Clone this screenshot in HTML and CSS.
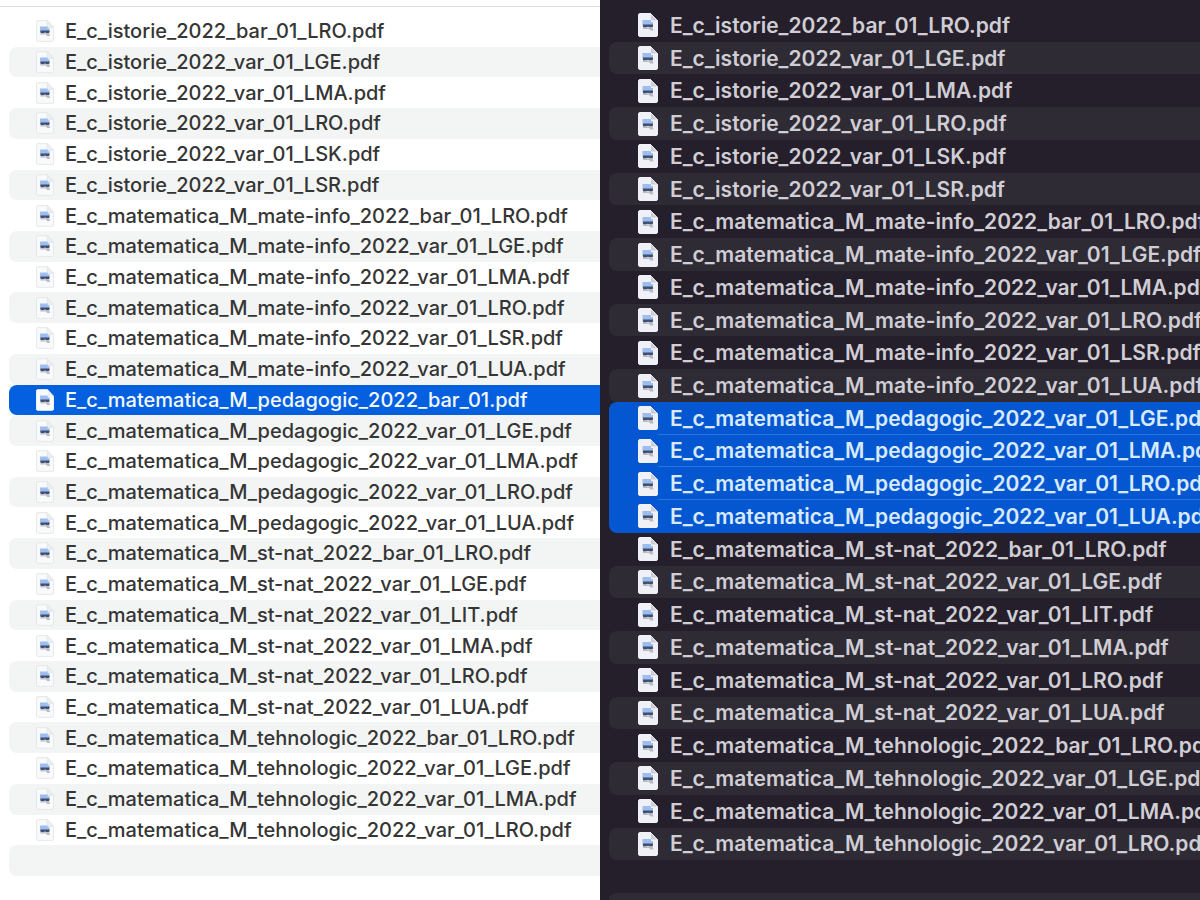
FILE: index.html
```html
<!DOCTYPE html>
<html lang="ro">
<head>
<meta charset="utf-8">
<title>Fișiere</title>
<link rel="stylesheet" href="styles.css">
</head>
<body>
<svg class="sprite" aria-hidden="true">
  <symbol id="doc" viewBox="0 0 20 24">
    <path class="sheet" d="M2 .5h10.500L19.500 8v14a1.500 1.500 0 0 1-1.500 1.500H2A1.500 1.500 0 0 1 .5 22V2A1.500 1.500 0 0 1 2 .5z"/>
    <path class="fold" d="M12.500 .5 19.500 8h-5.500a1.500 1.500 0 0 1-1.500-1.500z"/>
    <path class="sky" d="M4.500 7h8.500v2h2v4H4.500z"/>
    <path class="ink" d="M5 11.500h10v2l-1 1h-2l-2-.8-2 .8H5z"/>
    <path class="shade" d="M5 14.500h10v1.200l.5 1.800h-3l-1.500-1.500H5z"/>
  </symbol>
</svg>
<main class="compare">
  <section class="pane light">
    <ul class="files">
      <li class="row"><svg class="icon"><use href="#doc"/></svg><span>E_c_istorie_2022_bar_01_LRO.pdf</span></li>
      <li class="row"><svg class="icon"><use href="#doc"/></svg><span>E_c_istorie_2022_var_01_LGE.pdf</span></li>
      <li class="row"><svg class="icon"><use href="#doc"/></svg><span>E_c_istorie_2022_var_01_LMA.pdf</span></li>
      <li class="row"><svg class="icon"><use href="#doc"/></svg><span>E_c_istorie_2022_var_01_LRO.pdf</span></li>
      <li class="row"><svg class="icon"><use href="#doc"/></svg><span>E_c_istorie_2022_var_01_LSK.pdf</span></li>
      <li class="row"><svg class="icon"><use href="#doc"/></svg><span>E_c_istorie_2022_var_01_LSR.pdf</span></li>
      <li class="row"><svg class="icon"><use href="#doc"/></svg><span>E_c_matematica_M_mate-info_2022_bar_01_LRO.pdf</span></li>
      <li class="row"><svg class="icon"><use href="#doc"/></svg><span>E_c_matematica_M_mate-info_2022_var_01_LGE.pdf</span></li>
      <li class="row"><svg class="icon"><use href="#doc"/></svg><span>E_c_matematica_M_mate-info_2022_var_01_LMA.pdf</span></li>
      <li class="row"><svg class="icon"><use href="#doc"/></svg><span>E_c_matematica_M_mate-info_2022_var_01_LRO.pdf</span></li>
      <li class="row"><svg class="icon"><use href="#doc"/></svg><span>E_c_matematica_M_mate-info_2022_var_01_LSR.pdf</span></li>
      <li class="row"><svg class="icon"><use href="#doc"/></svg><span>E_c_matematica_M_mate-info_2022_var_01_LUA.pdf</span></li>
      <li class="row selected"><svg class="icon"><use href="#doc"/></svg><span>E_c_matematica_M_pedagogic_2022_bar_01.pdf</span></li>
      <li class="row"><svg class="icon"><use href="#doc"/></svg><span>E_c_matematica_M_pedagogic_2022_var_01_LGE.pdf</span></li>
      <li class="row"><svg class="icon"><use href="#doc"/></svg><span>E_c_matematica_M_pedagogic_2022_var_01_LMA.pdf</span></li>
      <li class="row"><svg class="icon"><use href="#doc"/></svg><span>E_c_matematica_M_pedagogic_2022_var_01_LRO.pdf</span></li>
      <li class="row"><svg class="icon"><use href="#doc"/></svg><span>E_c_matematica_M_pedagogic_2022_var_01_LUA.pdf</span></li>
      <li class="row"><svg class="icon"><use href="#doc"/></svg><span>E_c_matematica_M_st-nat_2022_bar_01_LRO.pdf</span></li>
      <li class="row"><svg class="icon"><use href="#doc"/></svg><span>E_c_matematica_M_st-nat_2022_var_01_LGE.pdf</span></li>
      <li class="row"><svg class="icon"><use href="#doc"/></svg><span>E_c_matematica_M_st-nat_2022_var_01_LIT.pdf</span></li>
      <li class="row"><svg class="icon"><use href="#doc"/></svg><span>E_c_matematica_M_st-nat_2022_var_01_LMA.pdf</span></li>
      <li class="row"><svg class="icon"><use href="#doc"/></svg><span>E_c_matematica_M_st-nat_2022_var_01_LRO.pdf</span></li>
      <li class="row"><svg class="icon"><use href="#doc"/></svg><span>E_c_matematica_M_st-nat_2022_var_01_LUA.pdf</span></li>
      <li class="row"><svg class="icon"><use href="#doc"/></svg><span>E_c_matematica_M_tehnologic_2022_bar_01_LRO.pdf</span></li>
      <li class="row"><svg class="icon"><use href="#doc"/></svg><span>E_c_matematica_M_tehnologic_2022_var_01_LGE.pdf</span></li>
      <li class="row"><svg class="icon"><use href="#doc"/></svg><span>E_c_matematica_M_tehnologic_2022_var_01_LMA.pdf</span></li>
      <li class="row"><svg class="icon"><use href="#doc"/></svg><span>E_c_matematica_M_tehnologic_2022_var_01_LRO.pdf</span></li>
      <li class="row" aria-hidden="true"></li>
    </ul>
  </section>
  <section class="pane dark">
    <ul class="files">
      <li class="row"><svg class="icon"><use href="#doc"/></svg><span>E_c_istorie_2022_bar_01_LRO.pdf</span></li>
      <li class="row"><svg class="icon"><use href="#doc"/></svg><span>E_c_istorie_2022_var_01_LGE.pdf</span></li>
      <li class="row"><svg class="icon"><use href="#doc"/></svg><span>E_c_istorie_2022_var_01_LMA.pdf</span></li>
      <li class="row"><svg class="icon"><use href="#doc"/></svg><span>E_c_istorie_2022_var_01_LRO.pdf</span></li>
      <li class="row"><svg class="icon"><use href="#doc"/></svg><span>E_c_istorie_2022_var_01_LSK.pdf</span></li>
      <li class="row"><svg class="icon"><use href="#doc"/></svg><span>E_c_istorie_2022_var_01_LSR.pdf</span></li>
      <li class="row"><svg class="icon"><use href="#doc"/></svg><span>E_c_matematica_M_mate-info_2022_bar_01_LRO.pdf</span></li>
      <li class="row"><svg class="icon"><use href="#doc"/></svg><span>E_c_matematica_M_mate-info_2022_var_01_LGE.pdf</span></li>
      <li class="row"><svg class="icon"><use href="#doc"/></svg><span>E_c_matematica_M_mate-info_2022_var_01_LMA.pdf</span></li>
      <li class="row"><svg class="icon"><use href="#doc"/></svg><span>E_c_matematica_M_mate-info_2022_var_01_LRO.pdf</span></li>
      <li class="row"><svg class="icon"><use href="#doc"/></svg><span>E_c_matematica_M_mate-info_2022_var_01_LSR.pdf</span></li>
      <li class="row"><svg class="icon"><use href="#doc"/></svg><span>E_c_matematica_M_mate-info_2022_var_01_LUA.pdf</span></li>
      <li class="row selected first"><svg class="icon"><use href="#doc"/></svg><span>E_c_matematica_M_pedagogic_2022_var_01_LGE.pdf</span></li>
      <li class="row selected"><svg class="icon"><use href="#doc"/></svg><span>E_c_matematica_M_pedagogic_2022_var_01_LMA.pdf</span></li>
      <li class="row selected"><svg class="icon"><use href="#doc"/></svg><span>E_c_matematica_M_pedagogic_2022_var_01_LRO.pdf</span></li>
      <li class="row selected last"><svg class="icon"><use href="#doc"/></svg><span>E_c_matematica_M_pedagogic_2022_var_01_LUA.pdf</span></li>
      <li class="row"><svg class="icon"><use href="#doc"/></svg><span>E_c_matematica_M_st-nat_2022_bar_01_LRO.pdf</span></li>
      <li class="row"><svg class="icon"><use href="#doc"/></svg><span>E_c_matematica_M_st-nat_2022_var_01_LGE.pdf</span></li>
      <li class="row"><svg class="icon"><use href="#doc"/></svg><span>E_c_matematica_M_st-nat_2022_var_01_LIT.pdf</span></li>
      <li class="row"><svg class="icon"><use href="#doc"/></svg><span>E_c_matematica_M_st-nat_2022_var_01_LMA.pdf</span></li>
      <li class="row"><svg class="icon"><use href="#doc"/></svg><span>E_c_matematica_M_st-nat_2022_var_01_LRO.pdf</span></li>
      <li class="row"><svg class="icon"><use href="#doc"/></svg><span>E_c_matematica_M_st-nat_2022_var_01_LUA.pdf</span></li>
      <li class="row"><svg class="icon"><use href="#doc"/></svg><span>E_c_matematica_M_tehnologic_2022_bar_01_LRO.pdf</span></li>
      <li class="row"><svg class="icon"><use href="#doc"/></svg><span>E_c_matematica_M_tehnologic_2022_var_01_LGE.pdf</span></li>
      <li class="row"><svg class="icon"><use href="#doc"/></svg><span>E_c_matematica_M_tehnologic_2022_var_01_LMA.pdf</span></li>
      <li class="row"><svg class="icon"><use href="#doc"/></svg><span>E_c_matematica_M_tehnologic_2022_var_01_LRO.pdf</span></li>
      <li class="row" aria-hidden="true"></li>
    </ul>
    <div class="next-row"></div>
  </section>
</main>
</body>
</html>
```
FILE: styles.css
```css
* { box-sizing: border-box; }
body {
  margin: 0;
  font-family: Inter, "Liberation Sans", sans-serif;
}
.sprite { display: block; width: 0; height: 0; }
.compare {
  display: grid;
  grid-template-columns: minmax(0, 1fr) minmax(0, 1fr);
  min-height: 100vh;
}
.pane {
  display: flex;
  flex-direction: column;
  overflow: hidden;
  padding-left: 9px;
}
.files {
  flex: 1;
  display: grid;
  grid-auto-rows: minmax(24px, 1fr);
  margin: 0;
  padding: 0;
  list-style: none;
}
.row {
  position: relative;
  display: flex;
  align-items: center;
  border-radius: 8px 0 0 8px;
  white-space: nowrap;
}
.icon { flex: none; }
.sheet { fill: var(--sheet); stroke: var(--edge); }
.fold { fill: var(--fold); stroke: var(--edge); }
.sky { fill: #9dbdf0; }
.ink { fill: #3f4f6d; }
.shade { fill: #b9bcc4; }

.light {
  --sheet: #f9fafb;
  --edge: #e3e5e7;
  --fold: #eceff2;
  padding-top: 6px;
  padding-bottom: 24px;
  background: #fff;
  color: #353535;
  font-size: 20px;
  font-weight: 500;
}
.light .files {
  border-top: 1px solid #dedede;
  margin-left: -9px;
  padding: 9px 0 0 9px;
}
.light .row { padding-left: 27px; gap: 11px; }
.light .row:nth-child(even) { background: #f3f5f5; }
.light .icon { width: 18px; height: 22px; }
.light .row.selected {
  --edge: #f9fafb;
  background: #0560df;
  color: #f4f9ff;
}

.dark {
  --sheet: #f0f1f6;
  --edge: #f0f1f6;
  --fold: #c9ccd6;
  padding-top: 9px;
  background: #241f2a;
  color: #d0cdd4;
  font-size: 21px;
  font-weight: 600;
}
.dark .row { padding-left: 29px; gap: 12px; }
.dark .row:nth-child(even) { background: #2e2b35; }
.dark .icon { width: 20px; height: 24px; }
.dark .row.selected { background: #0457d0; color: #d8eaff; border-radius: 0; }
.dark .row.first { border-top-left-radius: 8px; }
.dark .row.last { border-bottom-left-radius: 8px; }
.dark .selected:not(.last)::after {
  content: "";
  position: absolute;
  left: 49px;
  right: 0;
  bottom: 0;
  height: 1px;
  background: #2a74dd;
}
.next-row {
  height: 7px;
  border-radius: 8px 0 0 0;
  background: #2e2b35;
}
```
